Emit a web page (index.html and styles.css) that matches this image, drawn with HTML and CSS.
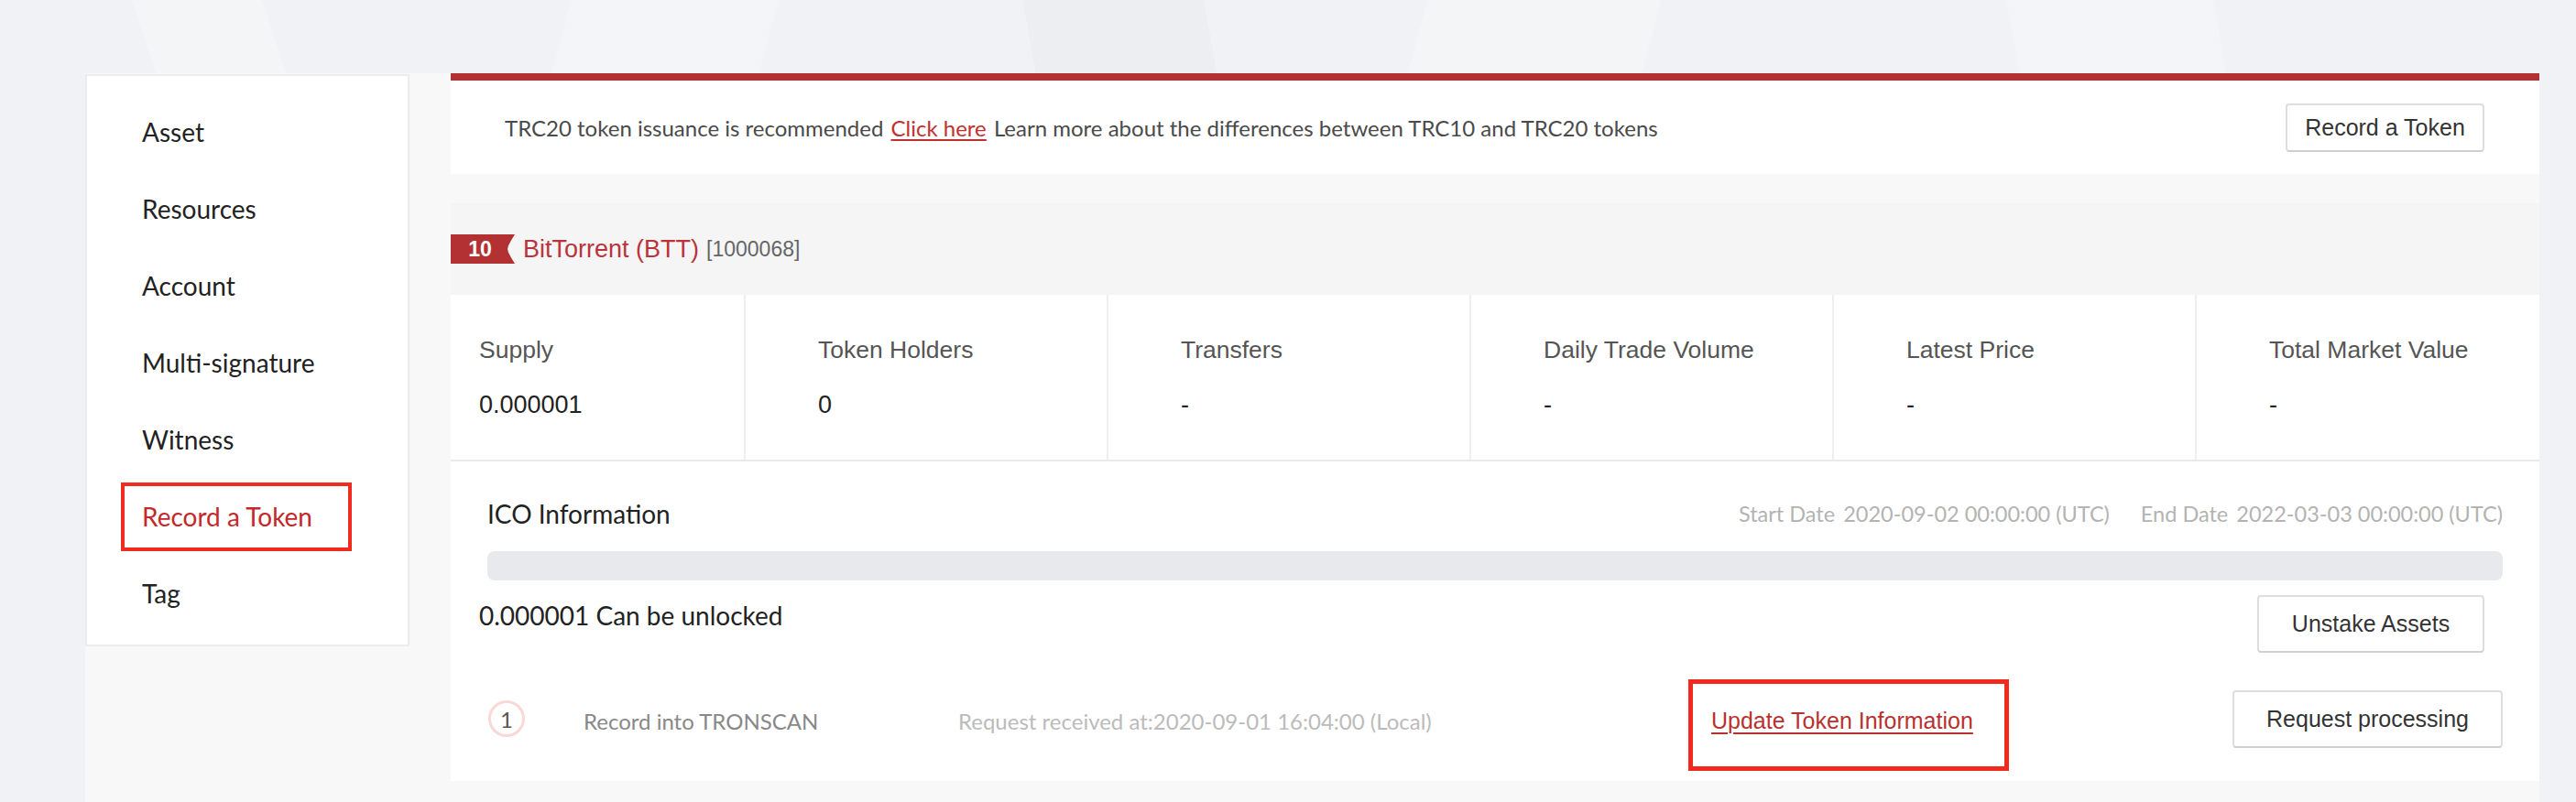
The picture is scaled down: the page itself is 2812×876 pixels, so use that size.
FILE: index.html
```html
<!DOCTYPE html>
<html lang="en">
  <head>
    <meta charset="UTF-8" />
    <meta name="viewport" content="width=device-width, initial-scale=1.0" />
    <title>Record a Token</title>
    <link rel="stylesheet" href="styles.css">
  </head>
  <body>
    <div class="page">
      <aside class="sidebar">
        <ul class="side-menu">
          <li><a href="#">Asset</a></li>
          <li><a href="#">Resources</a></li>
          <li><a href="#">Account</a></li>
          <li><a href="#">Multi-signature</a></li>
          <li><a href="#">Witness</a></li>
          <li><a href="#" class="active">Record a Token</a></li>
          <li><a href="#">Tag</a></li>
        </ul>
      </aside>

      <main class="main">
        <div class="notice">
          <p>
            TRC20 token issuance is recommended
            <a href="#" class="link">Click here</a>
            Learn more about the differences between TRC10 and TRC20 tokens
          </p>
          <button class="btn">Record a Token</button>
        </div>

        <div class="token-card">
          <div class="token-header">
            <span class="badge">10</span>
            <span class="token-name">BitTorrent (BTT)</span>
            <span class="token-id">[1000068]</span>
          </div>

          <div class="stats">
            <div class="stat">
              <div class="stat-label">Supply</div>
              <div class="stat-value">0.000001</div>
            </div>
            <div class="stat">
              <div class="stat-label">Token Holders</div>
              <div class="stat-value">0</div>
            </div>
            <div class="stat">
              <div class="stat-label">Transfers</div>
              <div class="stat-value">-</div>
            </div>
            <div class="stat">
              <div class="stat-label">Daily Trade Volume</div>
              <div class="stat-value">-</div>
            </div>
            <div class="stat">
              <div class="stat-label">Latest Price</div>
              <div class="stat-value">-</div>
            </div>
            <div class="stat">
              <div class="stat-label">Total Market Value</div>
              <div class="stat-value">-</div>
            </div>
          </div>

          <div class="ico">
            <div class="ico-head">
              <h2>ICO Information</h2>
              <div class="ico-dates">
                <span>Start Date <span class="date">2020-09-02 00:00:00 (UTC)</span></span>
                <span>End Date <span class="date">2022-03-03 00:00:00 (UTC)</span></span>
              </div>
            </div>
            <div class="progress"></div>
            <div class="unlock-row">
              <span class="unlock-text">0.000001 Can be unlocked</span>
              <button class="btn btn-unstake">Unstake Assets</button>
            </div>
            <div class="step">
              <span class="step-num">1</span>
              <span class="step-name">Record into TRONSCAN</span>
              <span class="step-time">Request received at:2020-09-01 16:04:00 (Local)</span>
              <div class="step-update">
                <a href="#" class="update-link">Update Token Information</a>
              </div>
              <button class="btn btn-process">Request processing</button>
            </div>
          </div>
        </div>
      </main>
    </div>
  </body>
</html>
```

FILE: styles.css
```css
body {
  margin: 0;
  font-family: Lato, "Noto Sans", sans-serif;
  background-color: #f1f2f5;
  background-image:
    linear-gradient(72deg, transparent 0 6%, rgba(255, 255, 255, 0.25) 6% 11%, transparent 11%),
    linear-gradient(105deg, transparent 0 22%, rgba(255, 255, 255, 0.2) 22% 30%, transparent 30% 55%, rgba(255, 255, 255, 0.25) 55% 64%, transparent 64%),
    linear-gradient(80deg, transparent 0 40%, rgba(230, 231, 235, 0.35) 40% 47%, transparent 47% 78%, rgba(255, 255, 255, 0.2) 78% 86%, transparent 86%);
  background-size: 100% 80px;
  background-repeat: no-repeat;
  color: #222;
}

.page {
  display: flex;
  gap: 45px;
  margin: 80px 40px 0 93px;
  min-height: calc(100vh - 80px);
  background-color: #f8f8f8;
  align-items: flex-start;
}

/* left menu */
.sidebar {
  width: 354px;
  box-sizing: border-box;
  background-color: #fff;
  border: 2px solid #ececec;
  margin-top: 1px;
}

.side-menu {
  list-style: none;
  margin: 0;
  padding: 19px 0 14px 37px;
}

.side-menu li {
  height: 84px;
  display: flex;
  align-items: center;
}

.side-menu a {
  display: flex;
  align-items: center;
  box-sizing: border-box;
  width: 252px;
  height: 75px;
  padding-left: 19px;
  border: 4px solid transparent;
  color: #222;
  text-decoration: none;
  font-size: 28px;
}

.side-menu a.active {
  color: #c4282b;
  border-color: #f02b20;
}

/* main column */
.main {
  flex: 1;
  display: flex;
  flex-direction: column;
  gap: 32px;
}

.notice {
  display: flex;
  align-items: center;
  justify-content: space-between;
  height: 102px;
  padding: 0 60px 0 59px;
  background-color: #fff;
  border-top: 8px solid #b33132;
}

.notice p {
  margin: 0;
  font-size: 24px;
  color: #4a4a4a;
}

.link {
  color: #c0312f;
  text-decoration-thickness: 2px;
  text-underline-offset: 3px;
  margin: 0 2px;
}

.btn {
  font-family: "Liberation Sans", Arial, sans-serif;
  font-size: 25px;
  color: #333;
  background-color: #fff;
  border: 2px solid #dedede;
  border-bottom-color: #cfcfcf;
  border-radius: 4px;
  cursor: pointer;
  padding: 0;
}

.notice .btn {
  width: 217px;
  height: 53px;
}

.token-card {
  background-color: #fff;
}

.token-header {
  display: flex;
  align-items: center;
  height: 100px;
  background-color: #f5f5f5;
  font-family: "Liberation Sans", Arial, sans-serif;
}

.badge {
  width: 70px;
  height: 32px;
  box-sizing: border-box;
  padding-right: 6px;
  display: flex;
  align-items: center;
  justify-content: center;
  background-color: #b33132;
  color: #fff;
  font-weight: bold;
  font-size: 23px;
  clip-path: polygon(0 0, 100% 0, calc(100% - 4px) 20%, calc(100% - 7px) 38%, calc(100% - 8px) 50%, calc(100% - 7px) 62%, calc(100% - 4px) 80%, 100% 100%, 0 100%);
}

.token-name {
  margin-left: 9px;
  font-size: 27px;
  color: #b9343a;
}

.token-id {
  margin-left: 8px;
  font-size: 23px;
  color: #666;
}

.stats {
  display: grid;
  grid-template-columns: 320px repeat(4, 396px) 1fr;
  border-bottom: 2px solid #e9e9ee;
  font-family: "Liberation Sans", Arial, sans-serif;
}

.stat {
  padding: 45px 0 44px 79px;
  border-left: 2px solid #efeff3;
}

.stat:first-child {
  padding-left: 31px;
  border-left: none;
}

.stat-label {
  font-size: 26.5px;
  line-height: 31px;
  color: #555;
}

.stat-value {
  margin-top: 28px;
  font-size: 27px;
  line-height: 32px;
  color: #222;
}

/* ICO block */
.ico {
  padding: 40px 40px 11px;
}

.ico-head {
  display: flex;
  justify-content: space-between;
  align-items: center;
}

.ico-head h2 {
  margin: 0;
  font-size: 28px;
  line-height: 34px;
  font-weight: normal;
  color: #222;
}

.ico-dates {
  display: flex;
  gap: 34px;
  font-size: 23.5px;
  color: #b3b3b3;
}

.date {
  margin-left: 3px;
}

.progress {
  margin-top: 24px;
  height: 32px;
  border-radius: 8px;
  background-color: #e8e9ed;
}

.unlock-row {
  display: flex;
  justify-content: space-between;
  align-items: flex-start;
  margin-top: 16px;
}

.unlock-text {
  margin: 5px 0 0 -9px;
  font-size: 28px;
  line-height: 34px;
}

.btn-unstake {
  width: 248px;
  height: 63px;
  margin-right: 20px;
}

.step {
  display: flex;
  align-items: flex-start;
  height: 100px;
  margin-top: 29px;
}

.step-num {
  width: 40px;
  height: 40px;
  box-sizing: border-box;
  margin: 23px 0 0 1px;
  border: 3px solid #f9d8d8;
  border-radius: 50%;
  display: flex;
  align-items: center;
  justify-content: center;
  font-size: 24px;
  color: #555;
}

.step-name {
  width: 409px;
  margin: 31px 0 0 64px;
  font-size: 24px;
  line-height: 29px;
  color: #888;
}

.step-time {
  width: 797px;
  margin-top: 31px;
  font-size: 24px;
  line-height: 29px;
  color: #bbb;
}

.step-update {
  width: 350px;
  height: 100px;
  box-sizing: border-box;
  padding: 26px 0 0 20px;
  border: 5px solid #f22a1e;
}

.update-link {
  font-family: "Liberation Sans", Arial, sans-serif;
  font-size: 25px;
  line-height: 29px;
  color: #b8312f;
  text-decoration-thickness: 2px;
  text-underline-offset: 4px;
}

.btn-process {
  width: 295px;
  height: 63px;
  margin: 12px 0 0 auto;
}
```
